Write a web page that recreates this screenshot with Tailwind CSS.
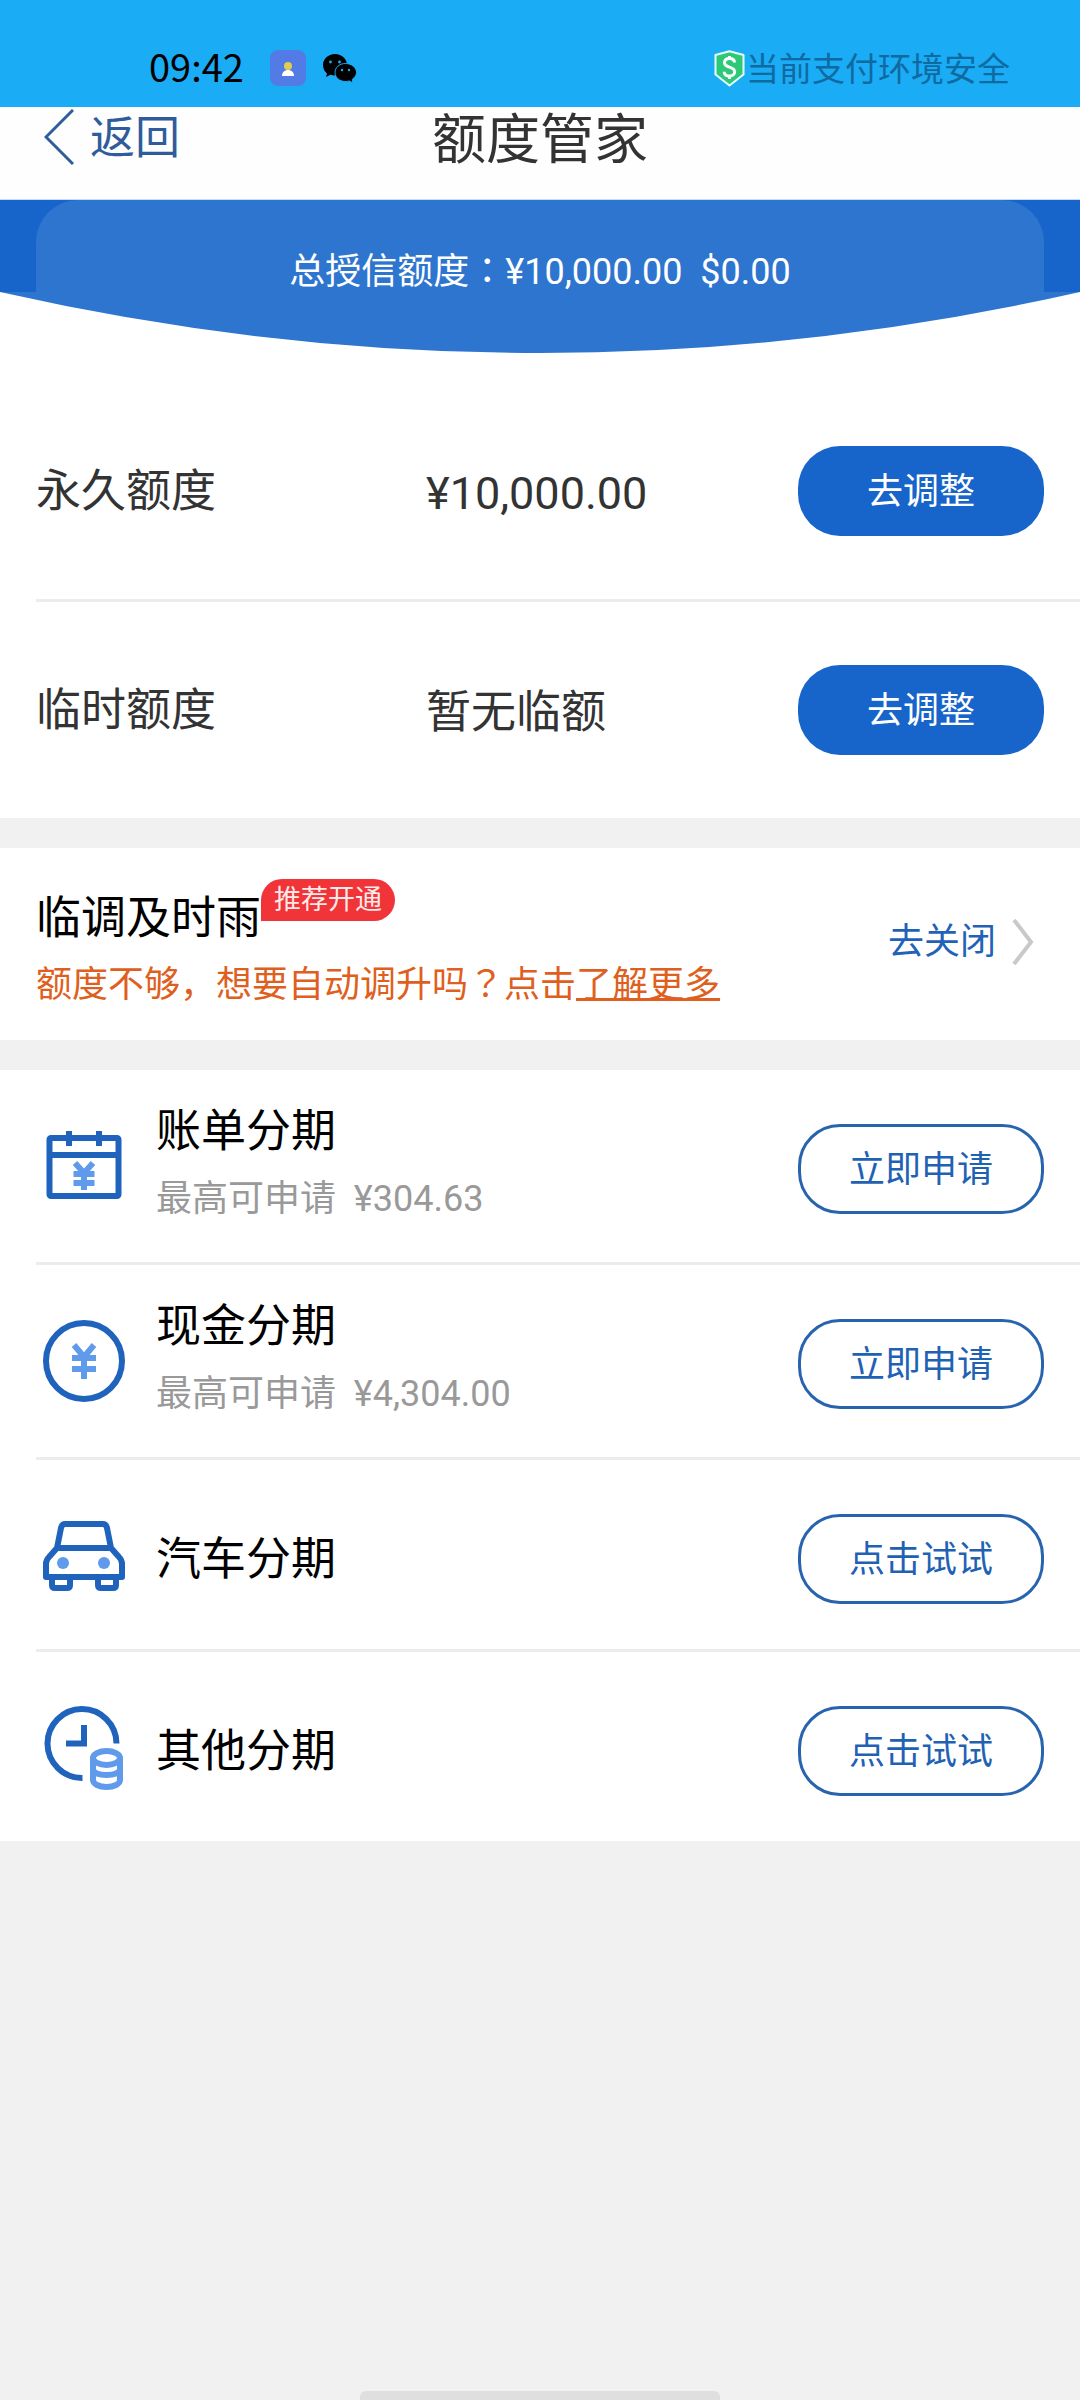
<!DOCTYPE html>
<html lang="zh-CN">
<head>
<meta charset="utf-8">
<meta name="viewport" content="width=device-width, initial-scale=1">
<title>额度管家</title>
<script src="https://cdn.jsdelivr.net/npm/@tailwindcss/browser@4"></script>
</head>
<body class="flex min-h-screen flex-col bg-[#f1f1f1] font-['Roboto','Noto_Sans_CJK_SC',sans-serif] text-[#333]">

  <!-- Status bar -->
  <div class="flex h-[107px] items-start justify-between bg-[#1bacf6] pt-[46px] pr-[70px] pl-[149px]">
    <div class="flex h-[44px] items-center text-black">
      <time class="pb-1 font-['Noto_Sans_CJK_SC',sans-serif] text-[38px] leading-[44px]">09:42</time>
      <svg class="ml-[26px] size-9" viewBox="0 0 36 36" aria-hidden="true">
        <rect width="36" height="36" rx="8" fill="#527be6"/>
        <circle cx="18" cy="16" r="4" fill="#e3cb4c"/>
        <path d="M12 26c0-4 3-6 6-6s6 2 6 6z" fill="#fff"/>
      </svg>
      <svg class="ml-[17px] h-[30px] w-[34px]" viewBox="0 0 34 30" aria-hidden="true">
        <path d="M12 1C5 1 0 6 0 12c0 4 2 7 4 8.500L3 24l4.500-2.200c1.500.4 3 .6 4.500.6 7 0 12-4.800 12-10.500S19 1 12 1z" fill="#000"/>
        <path d="M22.500 10.500C16.500 10.500 12 14.500 12 19.500s4.500 9 10.500 9c1.400 0 2.700-.2 3.900-.6L30 30l-.8-3.600c2.400-1.700 4.300-4 4.300-6.900 0-5-5-9-11-9z" fill="#000" stroke="#1bacf6" stroke-width="1"/>
        <g fill="#1bacf6"><circle cx="7.500" cy="9" r="1.400"/><circle cx="16.500" cy="9" r="1.400"/><circle cx="19" cy="17" r="1.200"/><circle cx="26" cy="17" r="1.200"/></g>
      </svg>
    </div>
    <div class="flex h-[44px] items-center gap-px text-[#0e6aa0]">
      <svg class="h-[37px] w-[31px]" viewBox="0 0 31 37" aria-hidden="true">
        <path d="M15.500 1.200 29.500 5v19.500L15.500 35.500 1.500 24.500V5z" fill="#2dc978" stroke="#e6fff6" stroke-width="2" stroke-linejoin="round"/>
        <path d="M20.500 12.500c0-2.600-2-4-5-4s-5 1.600-5 4.200c0 5.600 10.200 3.200 10.200 9 0 2.700-2.200 4.300-5.200 4.300s-5.300-1.500-5.300-4.300M15.500 6v3M15.500 26v3" fill="none" stroke="#fff" stroke-width="3"/>
      </svg>
      <span class="pt-1 text-[33px] leading-[48px]">当前支付环境安全</span>
    </div>
  </div>

  <!-- Navigation bar -->
  <header class="grid h-[93px] grid-cols-[1fr_auto_1fr] items-start border-b border-[#c3ddf8] bg-[#fefefe] pr-11 pl-11">
    <a href="#" class="flex h-[60px] items-center gap-4 text-[45px] leading-[60px] text-[#2f5c9b]">
      <svg class="h-[56px] w-[30px]" viewBox="0 0 30 56" fill="none" stroke="currentColor" stroke-width="3" aria-hidden="true"><path d="M29 1 2 28l27 27"/></svg>
      <span class="pt-1">返回</span>
    </a>
    <h1 class="pt-[2px] text-[54px] leading-[64px]">额度管家</h1>
  </header>

  <main>
    <section class="bg-white">
      <!-- Total credit line banner -->
      <div class="bg-[#1765ca] px-9">
        <p class="h-[92px] rounded-t-[42px] bg-[#2e75d0] pt-[50px] text-center text-[36px] leading-[44px] whitespace-pre text-white">总授信额度<span lang="zh-TW" class="font-['Noto_Sans_CJK_TC',sans-serif] leading-none">：</span>¥10,000.00  $0.00</p>
      </div>
      <svg class="block h-[62px] w-full" viewBox="0 0 1080 62" preserveAspectRatio="none" aria-hidden="true"><path d="M0 0Q540 122 1080 0z" fill="#2e75d0"/></svg>

      <div class="mt-[29px] ml-9 grid grid-cols-[390px_1fr_auto] items-center border-b-[3px] border-[#ececec] py-[63px] pr-9 text-[45px] leading-[60px]">
        <h2 class="pt-[2px]">永久额度</h2>
        <p class="pt-[6px]">¥10,000.00</p>
        <button class="h-[90px] w-[246px] rounded-[42px] bg-[#1765ca] pt-[2px] text-[36px] text-white">去调整</button>
      </div>
      <div class="ml-9 grid grid-cols-[390px_1fr_auto] items-center py-[63px] pr-9 text-[45px] leading-[60px]">
        <h2 class="pt-[2px]">临时额度</h2>
        <p class="pt-[6px]">暂无临额</p>
        <button class="h-[90px] w-[246px] rounded-[42px] bg-[#1765ca] pt-[2px] text-[36px] text-white">去调整</button>
      </div>
    </section>

    <!-- Automatic temporary raise -->
    <section class="mt-[30px] flex items-start justify-between bg-white pr-[46px] pb-[31px] pl-9">
      <div class="pt-[31px]">
        <div class="flex items-start">
          <h2 class="pt-[10px] text-[45px] leading-[60px] text-black">临调及时雨</h2>
          <span class="h-[42px] rounded-[21px] rounded-bl-none bg-[#f13438] px-[13px] text-[27px] leading-[42px] text-[#ffe9e9]">推荐开通</span>
        </div>
        <p class="pt-[12px] text-[36px] leading-[48px] text-[#df5f20]">额度不够，想要自动调升吗<span lang="zh-TW" class="font-['Noto_Sans_CJK_TC',sans-serif] leading-none">？</span>点击<a href="#" class="underline decoration-[3px] underline-offset-1 [text-decoration-skip-ink:none]">了解更多</a></p>
      </div>
      <a href="#" class="flex items-center gap-4 pt-[69px] text-[36px] leading-[50px] text-[#1f62b8]">去关闭
        <svg class="h-[48px] w-[22px]" viewBox="0 0 22 48" fill="none" stroke="#c9c9c9" stroke-width="4" aria-hidden="true"><path d="M2 2l17 22L2 46"/></svg>
      </a>
    </section>

    <!-- Instalment products -->
    <ul class="mt-[30px] bg-white pl-9">
      <li class="flex items-start gap-[30px] border-b-[3px] border-[#ececec] pt-[54px] pr-9 pb-12 pl-[6px]">
        <svg class="h-[90px] w-[84px]" viewBox="0 0 84 90" fill="none" aria-hidden="true">
          <g stroke="#1f63bd" stroke-width="6"><rect x="7.500" y="14" width="69" height="58" rx="1.500"/><path d="M7 31h70M27 7v15M57 7v15"/></g>
          <path d="M33 39l9 10 9-10M42 48v18M31.500 50h21M31.500 59h21" stroke="#5f9bea" stroke-width="6"/>
        </svg>
        <div class="-mt-[22px] -mb-3 flex-1">
          <h3 class="text-[45px] leading-[60px] text-black">账单分期</h3>
          <p class="pt-[13px] text-[36px] leading-[48px] whitespace-pre text-[#999]">最高可申请  ¥304.63</p>
        </div>
        <button class="h-[90px] w-[246px] rounded-[42px] border-[3px] border-[#2864ae] pt-[2px] text-[36px] text-[#1f62b4]">立即申请</button>
      </li>
      <li class="flex items-start gap-[30px] border-b-[3px] border-[#ececec] pt-[54px] pr-9 pb-12 pl-[6px]">
        <svg class="h-[90px] w-[84px]" viewBox="0 0 84 90" fill="none" aria-hidden="true">
          <circle cx="42" cy="42" r="38" stroke="#1f63bd" stroke-width="6"/>
          <path d="M32 26l10 12 10-12M42 37v23M30 39h24M30 50h24" stroke="#5f9bea" stroke-width="6"/>
        </svg>
        <div class="-mt-[22px] -mb-3 flex-1">
          <h3 class="text-[45px] leading-[60px] text-black">现金分期</h3>
          <p class="pt-[13px] text-[36px] leading-[48px] whitespace-pre text-[#999]">最高可申请  ¥4,304.00</p>
        </div>
        <button class="h-[90px] w-[246px] rounded-[42px] border-[3px] border-[#2864ae] pt-[2px] text-[36px] text-[#1f62b4]">立即申请</button>
      </li>
      <li class="flex items-center gap-[30px] border-b-[3px] border-[#ececec] pt-[54px] pr-9 pb-[45px] pl-[6px]">
        <svg class="h-[90px] w-[84px]" viewBox="0 0 84 90" fill="none" aria-hidden="true">
          <g stroke="#1f63bd" stroke-width="6" stroke-linejoin="round"><path d="M15 34 19 14q1-4 4-4h38q3 0 4 4l4 20M15 34h54M15 34 7 43q-3 3-3 7v13h76V50q0-4-3-7l-8-9"/><path d="M10 64v7q0 3 3 3h12q3 0 3-3v-7M56 64v7q0 3 3 3h12q3 0 3-3v-7"/></g>
          <circle cx="21" cy="49" r="6" fill="#5f9bea"/><circle cx="62" cy="49" r="6" fill="#5f9bea"/>
        </svg>
        <h3 class="flex-1 pt-[2px] text-[45px] leading-[60px] text-black">汽车分期</h3>
        <button class="h-[90px] w-[246px] rounded-[42px] border-[3px] border-[#2864ae] pt-[2px] text-[36px] text-[#1f62b4]">点击试试</button>
      </li>
      <li class="flex items-center gap-[30px] pt-[54px] pr-9 pb-[45px] pl-[6px]">
        <svg class="h-[90px] w-[84px]" viewBox="0 0 84 90" fill="none" aria-hidden="true">
          <path d="M74.500 37.500A34.500 34.500 0 1 0 40.500 72M42 19v18.500H24" stroke="#1f63bd" stroke-width="6"/>
          <g stroke="#5f9bea" stroke-width="6"><ellipse cx="64.500" cy="52" rx="13.500" ry="7"/><path d="M51 52v22c0 4 6 7 13.500 7S78 78 78 74V52M51 63c0 4 6 6 13.500 6S78 67 78 63"/></g>
        </svg>
        <h3 class="flex-1 pt-[2px] text-[45px] leading-[60px] text-black">其他分期</h3>
        <button class="h-[90px] w-[246px] rounded-[42px] border-[3px] border-[#2864ae] pt-[2px] text-[36px] text-[#1f62b4]">点击试试</button>
      </li>
    </ul>
  </main>

  <!-- Gesture bar -->
  <div class="mx-auto mt-auto h-[9px] w-[360px] rounded-t-md bg-[#dfdfdf]"></div>
</body>
</html>
